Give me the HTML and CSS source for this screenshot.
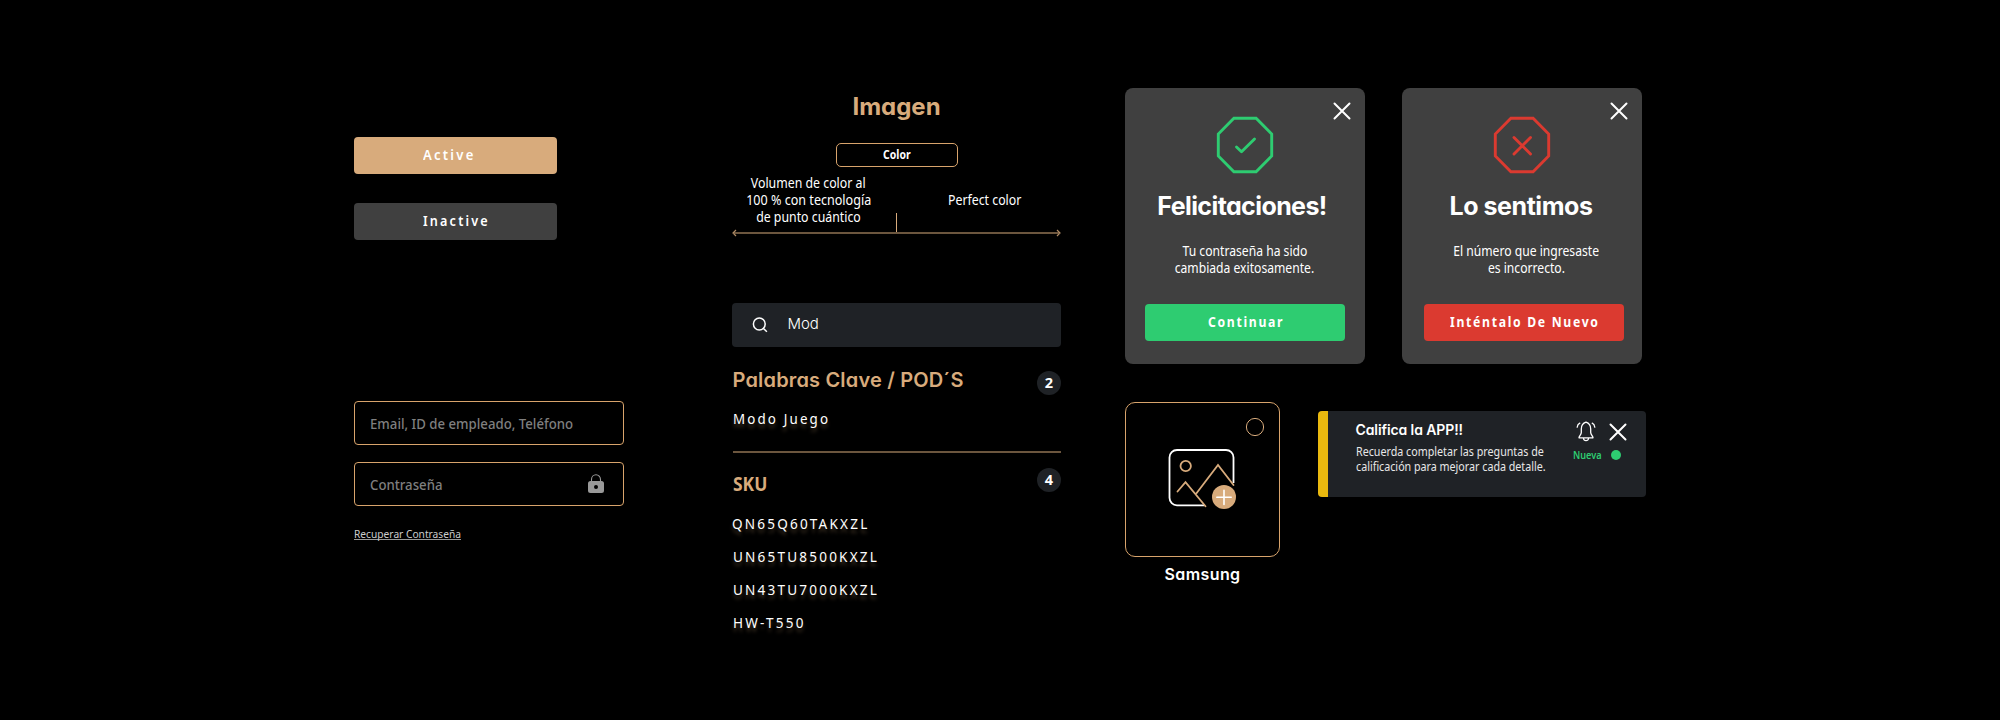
FILE: index.html
```html
<!DOCTYPE html>
<html lang="es">
<head>
<meta charset="utf-8">
<title>Componentes</title>
<link rel="stylesheet" href="styles.css">
</head>
<body>
<main class="board">
  <section class="col forms">
    <button class="btn btn-active"><span>Active</span></button>
    <button class="btn btn-inactive"><span>Inactive</span></button>
    <div class="field field-first"><span>Email, ID de empleado, Teléfono</span></div>
    <div class="field"><span>Contraseña</span>
      <svg class="lock" width="16" height="20" viewBox="0 0 16 20"><path d="M3.500 8V5.500a4.500 4.700 0 0 1 9 0V8" fill="none" stroke="#999" stroke-width="1.100"/><path fill="#999" fill-rule="evenodd" d="M2.500 7h11a2.500 2.500 0 0 1 2.500 2.500v7a2.500 2.500 0 0 1-2.500 2.500h-11a2.500 2.500 0 0 1-2.500-2.500v-7a2.500 2.500 0 0 1 2.500-2.500zM8 11a2 2 0 1 0 0 4a2 2 0 0 0 0-4z"/></svg>
    </div>
    <a class="recover"><span>Recuperar Contraseña</span></a>
  </section>

  <section class="col center">
    <h2 class="image-title"><span>Imagen</span></h2>
    <div class="chip"><span>Color</span></div>
    <div class="range">
      <p class="range-left"><span>Volumen de color al</span><br><span class="wide">100 % con tecnología</span><br><span>de punto cuántico</span></p>
      <p class="range-right"><span>Perfect color</span></p>
    </div>
    <svg class="axis" width="329" height="24" viewBox="0 0 329 24" fill="none"><path d="M164.500 0v20" stroke="#d8ab7c"/><path d="M2 20h325" stroke="#6c563e" stroke-width="2"/><path d="M4 17l-3 3l3 3M325 17l3 3l-3 3" stroke="#b08c66" stroke-width="1.200"/></svg>
    <div class="search">
      <svg width="16" height="16" viewBox="0 0 16 16" fill="none" stroke="#fff" stroke-width="1.500"><circle cx="7.300" cy="7" r="5.900"/><path d="M11.200 11.300l3.700 3.500"/></svg>
      <span class="query">Mod</span>
    </div>
    <div class="group-head keywords"><h3>Palabras Clave / POD´S</h3><span class="badge">2</span></div>
    <p class="item item-mode"><span>Modo Juego</span></p>
    <div class="divider"></div>
    <div class="group-head sku"><h3>SKU</h3><span class="badge">4</span></div>
    <ul class="codes">
      <li class="item code-q"><span>QN65Q60TAKXZL</span></li>
      <li class="item"><span>UN65TU8500KXZL</span></li>
      <li class="item"><span>UN43TU7000KXZL</span></li>
      <li class="item"><span>HW-T550</span></li>
    </ul>
  </section>

  <section class="col right">
    <div class="row modals">
      <article class="modal ok">
        <svg class="close" width="18" height="18" viewBox="0 0 18 18"><path d="M1.500 1.500l15 15M16.500 1.500l-15 15" stroke="#fff" stroke-width="2" stroke-linecap="round"/></svg>
        <svg class="octagon" width="58" height="58" viewBox="0 0 58 58" fill="none" stroke="#2ecc71" stroke-width="2.900"><path d="M17.900 2.200h22.200L55.700 18v22L40.100 55.700H17.900L2.300 40V18z"/><path d="M20.500 31l5 4.700L38.500 23" stroke-linecap="round" stroke-linejoin="round"/></svg>
        <h2 class="modal-title"><span>Felicitaciones!</span></h2>
        <p class="modal-text"><span>Tu contraseña ha sido</span><br><span>cambiada exitosamente.</span></p>
        <button class="btn btn-ok"><span>Continuar</span></button>
      </article>
      <article class="modal fail">
        <svg class="close" width="18" height="18" viewBox="0 0 18 18"><path d="M1.500 1.500l15 15M16.500 1.500l-15 15" stroke="#fff" stroke-width="2" stroke-linecap="round"/></svg>
        <svg class="octagon" width="58" height="58" viewBox="0 0 58 58" fill="none" stroke="#db3a30" stroke-width="2.900"><path d="M17.900 2.200h22.200L55.700 18v22L40.100 55.700H17.900L2.300 40V18z"/><path d="M21 21.500l16.500 16.500M37.500 21.500L21 38" stroke-linecap="round"/></svg>
        <h2 class="modal-title"><span>Lo sentimos</span></h2>
        <p class="modal-text"><span>El número que ingresaste</span><br><span>es incorrecto.</span></p>
        <button class="btn btn-fail"><span>Inténtalo De Nuevo</span></button>
      </article>
    </div>
    <div class="row lower">
      <figure class="picker">
        <div class="tile">
          <svg width="153" height="153" viewBox="0 0 153 153" fill="none">
            <circle cx="129" cy="24" r="8.600" stroke="#d8ab7c" stroke-width="1"/>
            <path d="M78.500 102.300H51a7.500 7.500 0 0 1-7.500-7.500V54.500A7.500 7.500 0 0 1 51 47h49a7.500 7.500 0 0 1 7.500 7.500V80" stroke="#fff" stroke-width="1.800"/>
            <path d="M51.500 88.500l8-9.300L79.500 103.300M70.500 90.200L92 62l15.500 20" stroke="#d8ab7c" stroke-width="1.800" stroke-linecap="round"/>
            <circle cx="59.700" cy="63" r="5.200" stroke="#d8ab7c" stroke-width="1.800"/>
            <circle cx="98" cy="94" r="12" fill="#d8ab7c"/>
            <path d="M98 87.200v14.200M90.800 94.300h14.400" stroke="#fff" stroke-width="1.600" stroke-linecap="round"/>
          </svg>
        </div>
        <figcaption><span>Samsung</span></figcaption>
      </figure>
      <aside class="toast">
        <div class="toast-body">
          <h4><span>Califica la APP!!</span></h4>
          <p><span>Recuerda completar las preguntas de</span><br><span>calificación para mejorar cada detalle.</span></p>
        </div>
        <div class="toast-side">
          <div class="toast-icons">
            <svg width="20" height="21" viewBox="0 0 20 21" fill="none" stroke="#fff" stroke-width="1.300" stroke-linecap="round" stroke-linejoin="round"><path d="M10 1.200C6.700 2.300 5.300 4.500 5.300 8v3.600c0 2-2.300 3.400-2.300 5.200h14c0-1.800-2.300-3.200-2.300-5.200V8c0-3.500-1.400-5.700-4.700-6.800zM7.500 17.500c.4 2.800 4.600 2.800 5 0M1.200 6.200c.2-1.800 1-3.200 2.600-4M18.800 6.200c-.2-1.800-1-3.200-2.600-4"/></svg>
            <svg width="18" height="18" viewBox="0 0 18 18"><path d="M1.500 1.500l15 15M16.500 1.500l-15 15" stroke="#fff" stroke-width="2" stroke-linecap="round"/></svg>
          </div>
          <div class="status"><span>Nueva</span><i class="dot"></i></div>
        </div>
      </aside>
    </div>
  </section>
</main>
</body>
</html>
```
FILE: styles.css
```css
* { box-sizing: border-box; margin: 0; padding: 0; }
body { background: #000; color: #fff; font-family: "Noto Sans", "Open Sans", sans-serif; }
svg { display: block; flex: none; }
span, h3 { white-space: nowrap; }
.board { display: flex; width: 2000px; height: 720px; padding-left: 354px; overflow: hidden; }
.col { display: flex; flex-direction: column; flex: none; }

/* Condensed text */
.btn span, .field span, .recover span, .item span, .toast p span, .status span, .sku h3 { display: inline-block; transform: scaleX(.87); transform-origin: left; }
.chip span, .range span, .modal-text span { display: inline-block; transform: scaleX(.88); }

.forms { width: 270px; padding-top: 137px; margin-right: 108px; align-items: flex-start; }
.btn { display: flex; align-items: center; height: 37px; border: 0; border-radius: 4px; color: #fff; font: 600 14.500px/35px "Noto Sans", sans-serif; letter-spacing: 2.500px; text-align: left; padding-bottom: 2px; }
.btn-active, .btn-inactive { width: 203px; padding-left: 69px; }
.btn-active { background: #d8ab7c; margin-bottom: 29px; }
.btn.btn-active span { transform: scaleX(.9); }
.btn-inactive { background: #404040; }
.field { display: flex; align-items: center; justify-content: space-between; width: 270px; height: 44px; padding: 0 19px 1px 14.500px; border: 1px solid #d8a46c; border-radius: 4px; color: #7f7f7f; font-size: 15px; font-weight: 500; margin-bottom: 20px; }
.field span { transform: scaleX(.88); }
.field-first { margin-top: 161px; margin-bottom: 17px; }
.recover { display: block; height: 14px; width: 107px; border-bottom: 1px solid #999; color: #ccc; font-size: 11.500px; line-height: 16px; }
.recover span { transform: scaleX(.888); }

.center { width: 329px; padding-top: 91px; margin-right: 64px; }
.image-title { text-align: center; font: 700 24px/32px Inter, sans-serif; font-feature-settings: "cv11"; color: #d8ab7c; }
.chip { width: 122px; height: 24px; margin: 20px 0 0 104px; border: 1px solid #d8a46c; border-radius: 5px; font-size: 12px; font-weight: 700; line-height: 22px; text-align: center; }
.chip span { transform: scaleX(.87); }
.range { display: flex; margin-top: 7px; font-size: 14px; line-height: 17px; text-align: center; }
.range p { flex: none; }
.range .wide { transform: scaleX(.897); }
.range-left { width: 153px; }
.range-right { width: 199px; padding-top: 17px; }
.axis { margin-top: -12px; }
.search { display: flex; align-items: center; height: 44px; margin-top: 66px; padding: 0 20px; background: #1f2226; border-radius: 4px; }
.query { margin-left: 19.500px; padding-bottom: 2px; font: 300 15px/20px Inter, sans-serif; font-feature-settings: "cv11"; letter-spacing: -.1px; }
.group-head { display: flex; justify-content: space-between; color: #d8ab7c; padding-left: .500px; }
.group-head h3 { line-height: 28px; font-size: 20px; font-weight: 600; }
.keywords { margin-top: 24px; }
.keywords h3 { margin-top: -5px; font-family: Inter, sans-serif; font-feature-settings: "cv11"; letter-spacing: .17px; }
.badge { width: 24px; height: 24px; border-radius: 50%; background: #1f2226; color: #fff; font-size: 14.500px; font-weight: 700; line-height: 23px; text-align: center; }
.item { list-style: none; height: 33px; padding-left: .500px; font-size: 14.200px; font-weight: 400; line-height: 20px; letter-spacing: 2.300px; text-shadow: 0 4px 4px rgba(216, 171, 124, .3); }
.item span { transform: scaleX(.955); }
.item.item-mode span { transform: scaleX(.94); }
.item-mode { margin-top: 14px; height: 42px; }
.divider { height: 2px; background: #6c563e; margin-left: 1px; }
.sku { margin-top: 15px; }
.sku h3 { margin-top: 2px; font-weight: 700; }
.codes { margin-top: 16px; }
.item.code-q { padding-left: 0; }

.right { padding-top: 88px; }
.row { display: flex; }
.modals { gap: 37px; }
.modal { position: relative; width: 240px; height: 276px; background: #404040; border-radius: 8px; padding: 28px 0 0 20px; text-align: center; }
.close { position: absolute; right: 14px; top: 14px; }
.octagon { margin-left: 71px; }
.modal-title { width: 194px; margin-top: 15px; font: 700 25px/34px Inter, sans-serif; font-feature-settings: "cv11"; letter-spacing: -.6px; }
.modal-text { width: 199px; margin-top: 19px; font-size: 14px; line-height: 17px; font-weight: 400; }
.modal-text span { transform: scaleX(.867); }
.modal .btn { width: 200px; margin-top: 28px; font-weight: 700; letter-spacing: 2px; }
.modal .btn span { transform: scaleX(.843); }
.btn-ok { background: #2ecc71; padding-left: 63px; }
.fail .modal-title { width: 198px; letter-spacing: -.46px; }
.fail .modal-text { width: 209px; }
.modal .btn-fail { background: #db3a30; margin-left: 2px; padding-left: 26px; }
.lower { margin-top: 38px; }
.picker { width: 155px; margin-right: 38px; text-align: center; }
.tile { height: 155px; border: 1px solid #d8a46c; border-radius: 10px; }
figcaption { margin-top: 5px; font: 600 16px/24px Inter, sans-serif; font-feature-settings: "cv11"; letter-spacing: .4px; }
.toast { display: flex; width: 328px; height: 86px; margin-top: 9px; border-left: 10px solid #eab90f; border-radius: 4px; background: #1f2226; }
.toast-body { flex: none; width: 217px; padding: 8px 0 0 27.500px; }
.toast h4 { font: 600 14px/22px Inter, sans-serif; font-feature-settings: "cv11"; letter-spacing: -.1px; }
.toast p { margin-top: 3px; font-size: 12.300px; line-height: 15px; color: #e8e8e8; }
.toast-side { padding: 10px 0 0; }
.toast-icons { display: flex; align-items: center; gap: 13px; padding-left: 31px; }
.status { display: flex; align-items: center; gap: 5.600px; padding-left: 28px; margin-top: 6px; font-size: 10.500px; line-height: 14px; font-weight: 600; color: #2ecc71; }
.status span { transform: scaleX(.87); }
.dot { width: 10px; height: 10px; border-radius: 50%; background: #2ecc71; }
```
